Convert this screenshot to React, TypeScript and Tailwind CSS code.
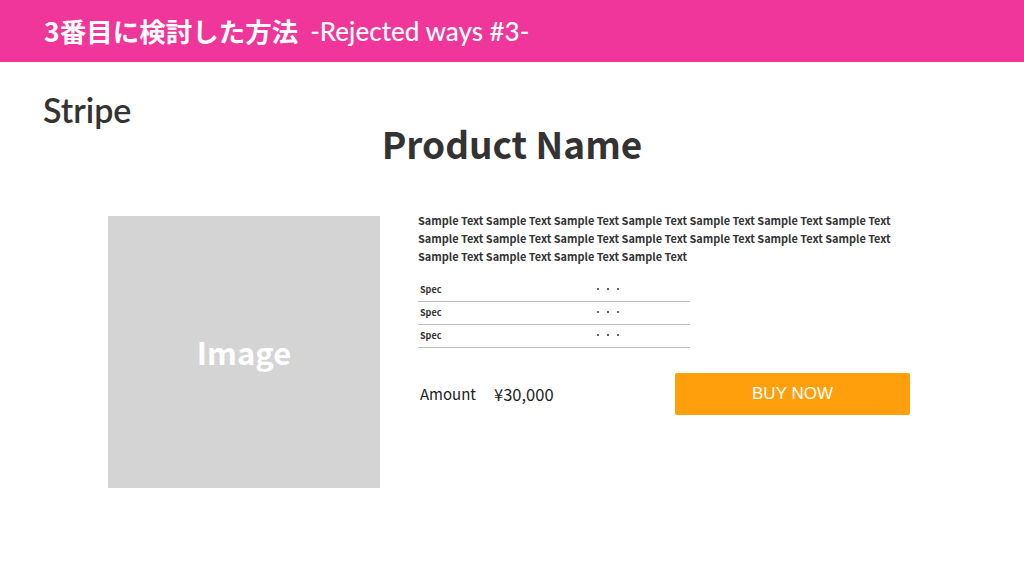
import React from "react";

const jp = { fontFamily: '"Noto Sans CJK JP", "Noto Sans", sans-serif' };
const lato = { fontFamily: 'Lato, "Noto Sans CJK JP", sans-serif' };

export default function App() {
  const sample = Array(18).fill("Sample Text").join(" ");
  return (
    <div className="w-[1024px] h-[576px] bg-white overflow-hidden flex flex-col text-[#333]">
      <div className="h-[62px] bg-[#f0369a] flex items-center px-[44px] text-white">
        <span className="text-[26.5px] font-bold" style={jp}>3番目に検討した方法</span>
        <span className="text-[26px] font-medium ml-[12px]" style={lato}>-Rejected ways #3-</span>
      </div>
      <div className="px-[43px] h-[40px] flex items-center mt-[28px]">
        <span className="text-[34px] font-semibold leading-none" style={lato}>Stripe</span>
      </div>
      <div className="flex justify-center h-[50px] items-center -mt-[12px]">
        <span className="text-[37px] font-bold leading-none text-[#333]" style={jp}>Product Name</span>
      </div>
      <div className="flex items-start pl-[108px] mt-[43px]">
        <div className="w-[272px] h-[272px] bg-[#d4d4d4] mt-[5px] flex items-center justify-center">
          <span className="text-[31px] font-bold text-white" style={jp}>Image</span>
        </div>
        <div className="ml-[38px] flex flex-col">
          <p className="w-[480px] text-[10.9px] font-bold leading-[18px] text-[#333]" style={jp}>{sample}</p>
          <div className="w-[272px] mt-[14px] flex flex-col">
            {[0, 1, 2].map((i) => (
              <div key={i} className="h-[23px] border-b border-[#bdbdbd] flex items-center pl-[2px]">
                <span className="w-[177px] text-[9px] font-bold" style={jp}>Spec</span>
                <span className="flex items-center gap-[8px] -mt-[2px]">
                  <span className="w-[2px] h-[2px] rounded-full bg-[#333]"></span>
                  <span className="w-[2px] h-[2px] rounded-full bg-[#333]"></span>
                  <span className="w-[2px] h-[2px] rounded-full bg-[#333]"></span>
                </span>
              </div>
            ))}
          </div>
          <div className="flex items-center mt-[25px]">
            <span className="w-[257px] flex items-center pl-[2px] text-[15px] text-[#222]" style={{ fontFamily: '"Noto Sans CJK JP", sans-serif' }}>
              <span>Amount</span>
              <span className="ml-[18px] text-[16.5px]">¥30,000</span>
            </span>
            <button className="w-[235px] h-[42px] bg-[#fe9f0b] rounded-[2px] text-white text-[17px] flex items-center justify-center" style={{ fontFamily: '"Liberation Sans", Arial, sans-serif' }}>
              BUY NOW
            </button>
          </div>
        </div>
      </div>
    </div>
  );
}
